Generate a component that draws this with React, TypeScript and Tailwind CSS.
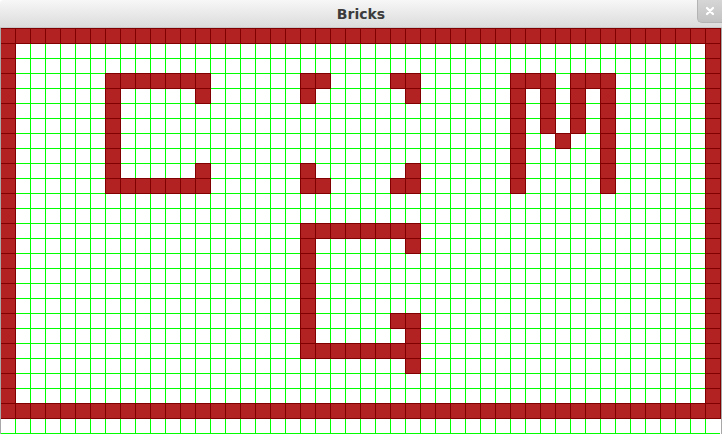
import React from "react";

const COLS = 48;
const ROWS = 28;

function buildBricks(): Set<string> {
  const s = new Set<string>();
  const add = (r: number, c: number) => s.add(`${r},${c}`);
  // walls
  for (let c = 0; c < COLS; c++) {
    add(0, c);
    add(25, c);
  }
  for (let r = 0; r <= 25; r++) {
    add(r, 0);
    add(r, 47);
  }
  // C
  for (let c = 7; c <= 13; c++) {
    add(3, c);
    add(10, c);
  }
  for (let r = 3; r <= 10; r++) add(r, 7);
  add(4, 13);
  add(9, 13);
  // eyes
  [
    [3, 20], [3, 21], [4, 20],
    [3, 26], [3, 27], [4, 27],
    [9, 20], [10, 20], [10, 21],
    [9, 27], [10, 26], [10, 27],
  ].forEach(([r, c]) => add(r, c));
  // M
  for (let r = 3; r <= 10; r++) {
    add(r, 34);
    add(r, 40);
  }
  for (let r = 3; r <= 6; r++) {
    add(r, 36);
    add(r, 38);
  }
  add(3, 35);
  add(3, 39);
  add(7, 37);
  // G
  for (let c = 20; c <= 27; c++) {
    add(13, c);
    add(21, c);
  }
  for (let r = 13; r <= 21; r++) add(r, 20);
  add(14, 27);
  add(19, 26);
  for (let r = 19; r <= 22; r++) add(r, 27);
  return s;
}

const bricks = buildBricks();

export default function App() {
  const cells: React.ReactNode[] = [];
  for (let r = 0; r < ROWS; r++) {
    for (let c = 0; c < COLS; c++) {
      const isBrick = bricks.has(`${r},${c}`);
      cells.push(
        <div
          key={`${r}-${c}`}
          className={
            isBrick
              ? "relative z-10 border-l border-t border-[#800000] bg-[#b22222] shadow-[1px_0_0_0_#800000,0_1px_0_0_#800000,1px_1px_0_0_#800000]"
              : "border-l border-t border-[#00ff00]"
          }
        />
      );
    }
  }

  return (
    <div className="w-[722px] h-[434px] bg-white flex flex-col overflow-hidden">
      <div className="relative h-[28px] shrink-0 flex items-center justify-center rounded-t-[4px] bg-gradient-to-b from-[#f7f7f7] to-[#dcdcdc] border-b border-[#c8c8c8]">
        <span
          className="text-[14px] font-bold text-[#3c3c3c] leading-none"
          style={{ fontFamily: '"DejaVu Sans", "Noto Sans", sans-serif' }}
        >
          Bricks
        </span>
        <div className="absolute right-0 top-0 w-[25px] h-[23px] rounded-bl-[5px] bg-gradient-to-b from-[#d6d6d6] to-[#c2c2c2] border-l border-b border-[#b4b4b4] flex items-center justify-center">
          <svg width="10" height="10" viewBox="0 0 10 10">
            <path d="M2 2 L8 8 M8 2 L2 8" stroke="#ffffff" strokeWidth="2.2" strokeLinecap="round" />
          </svg>
        </div>
      </div>
      <div className="relative flex-1 overflow-hidden bg-white">
        <div className="grid grid-cols-[repeat(48,15px)] grid-rows-[repeat(28,15px)]">
          {cells}
        </div>
        <div className="absolute left-0 top-0 bottom-0 w-px bg-[#a8a8a8] z-20" />
        <div className="absolute right-0 top-0 bottom-0 w-px bg-[#a8a8a8] z-20" />
      </div>
    </div>
  );
}
